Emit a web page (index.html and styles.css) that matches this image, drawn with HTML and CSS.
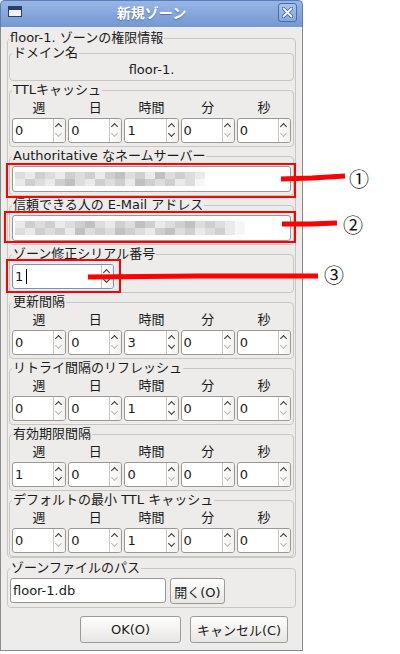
FILE: index.html
```html
<!DOCTYPE html>
<html lang="ja">
<head>
  <meta charset="UTF-8">
  <meta name="viewport" content="width=device-width, initial-scale=1.0">
  <title>新規ゾーン</title>
  <link rel="stylesheet" href="styles.css">
</head>
<body>
  <div class="window">
    <div class="titlebar">
      <span class="win-icon"></span>
      <span class="title">新規ゾーン</span>
      <span class="close-btn">
        <svg width="11" height="11" viewBox="0 0 11 11"><path d="M1.5 1.5 L9.5 9.5 M9.5 1.5 L1.5 9.5" stroke="#3d5f99" stroke-width="3.4" stroke-linecap="round"/><path d="M1.5 1.5 L9.5 9.5 M9.5 1.5 L1.5 9.5" stroke="#fff" stroke-width="1.8" stroke-linecap="round"/></svg>
      </span>
    </div>

    <div class="content">
      <fieldset class="group outer">
        <legend>floor-1. ゾーンの権限情報</legend>

        <fieldset class="group">
          <legend>ドメイン名</legend>
          <div class="domain">floor-1.</div>
        </fieldset>

        <fieldset class="group">
          <legend>TTLキャッシュ</legend>
          <div class="units">
            <span>週</span><span>日</span><span>時間</span><span>分</span><span>秒</span>
            <div class="spin"><span class="val">0</span><span class="arrows"><i class="up"></i><i class="down off"></i></span></div>
            <div class="spin"><span class="val">0</span><span class="arrows"><i class="up"></i><i class="down off"></i></span></div>
            <div class="spin"><span class="val">1</span><span class="arrows"><i class="up"></i><i class="down"></i></span></div>
            <div class="spin"><span class="val">0</span><span class="arrows"><i class="up"></i><i class="down off"></i></span></div>
            <div class="spin"><span class="val">0</span><span class="arrows"><i class="up"></i><i class="down off"></i></span></div>
          </div>
        </fieldset>

        <fieldset class="group">
          <legend>Authoritative なネームサーバー</legend>
          <div class="entry">
            <div class="mosaic m1">
              <span class="s2"></span><span class="s1"></span><span class="s3"></span><span class="s2"></span><span class="s1"></span><span class="s3"></span><span class="s2"></span><span class="s3"></span><span class="s1"></span><span class="s3"></span><span class="s4"></span><span class="s2"></span><span class="s3"></span><span class="s1"></span><span class="s4"></span><span class="s2"></span><span class="s3"></span><span class="s2"></span><span class="s1"></span>
              <span class="s1"></span><span class="s3"></span><span class="s2"></span><span class="s1"></span><span class="s3"></span><span class="s4"></span><span class="s2"></span><span class="s1"></span><span class="s3"></span><span class="s2"></span><span class="s3"></span><span class="s1"></span><span class="s4"></span><span class="s3"></span><span class="s2"></span><span class="s3"></span><span class="s1"></span><span class="s2"></span><span class="s0"></span>
            </div>
          </div>
        </fieldset>

        <fieldset class="group">
          <legend>信頼できる人の E-Mail アドレス</legend>
          <div class="entry">
            <div class="mosaic m2">
              <span class="s1"></span><span class="s3"></span><span class="s2"></span><span class="s3"></span><span class="s1"></span><span class="s2"></span><span class="s3"></span><span class="s4"></span><span class="s2"></span><span class="s1"></span><span class="s3"></span><span class="s2"></span><span class="s4"></span><span class="s3"></span><span class="s1"></span><span class="s2"></span><span class="s3"></span><span class="s4"></span><span class="s2"></span><span class="s3"></span><span class="s2"></span><span class="s1"></span><span class="s0"></span>
              <span class="s2"></span><span class="s1"></span><span class="s3"></span><span class="s2"></span><span class="s3"></span><span class="s1"></span><span class="s4"></span><span class="s2"></span><span class="s3"></span><span class="s2"></span><span class="s4"></span><span class="s3"></span><span class="s2"></span><span class="s1"></span><span class="s3"></span><span class="s4"></span><span class="s2"></span><span class="s3"></span><span class="s1"></span><span class="s2"></span><span class="s3"></span><span class="s1"></span><span class="s0"></span>
            </div>
          </div>
        </fieldset>

        <fieldset class="group">
          <legend>ゾーン修正シリアル番号</legend>
          <div class="spin serial focus"><span class="val">1<span class="caret"></span></span><span class="arrows"><i class="up"></i><i class="down"></i></span></div>
        </fieldset>

        <fieldset class="group">
          <legend>更新間隔</legend>
          <div class="units">
            <span>週</span><span>日</span><span>時間</span><span>分</span><span>秒</span>
            <div class="spin"><span class="val">0</span><span class="arrows"><i class="up"></i><i class="down off"></i></span></div>
            <div class="spin"><span class="val">0</span><span class="arrows"><i class="up"></i><i class="down off"></i></span></div>
            <div class="spin"><span class="val">3</span><span class="arrows"><i class="up"></i><i class="down"></i></span></div>
            <div class="spin"><span class="val">0</span><span class="arrows"><i class="up"></i><i class="down off"></i></span></div>
            <div class="spin"><span class="val">0</span><span class="arrows"><i class="up"></i><i class="down off"></i></span></div>
          </div>
        </fieldset>

        <fieldset class="group">
          <legend>リトライ間隔のリフレッシュ</legend>
          <div class="units">
            <span>週</span><span>日</span><span>時間</span><span>分</span><span>秒</span>
            <div class="spin"><span class="val">0</span><span class="arrows"><i class="up"></i><i class="down off"></i></span></div>
            <div class="spin"><span class="val">0</span><span class="arrows"><i class="up"></i><i class="down off"></i></span></div>
            <div class="spin"><span class="val">1</span><span class="arrows"><i class="up"></i><i class="down"></i></span></div>
            <div class="spin"><span class="val">0</span><span class="arrows"><i class="up"></i><i class="down off"></i></span></div>
            <div class="spin"><span class="val">0</span><span class="arrows"><i class="up"></i><i class="down off"></i></span></div>
          </div>
        </fieldset>

        <fieldset class="group">
          <legend>有効期限間隔</legend>
          <div class="units">
            <span>週</span><span>日</span><span>時間</span><span>分</span><span>秒</span>
            <div class="spin"><span class="val">1</span><span class="arrows"><i class="up"></i><i class="down"></i></span></div>
            <div class="spin"><span class="val">0</span><span class="arrows"><i class="up"></i><i class="down off"></i></span></div>
            <div class="spin"><span class="val">0</span><span class="arrows"><i class="up"></i><i class="down off"></i></span></div>
            <div class="spin"><span class="val">0</span><span class="arrows"><i class="up"></i><i class="down off"></i></span></div>
            <div class="spin"><span class="val">0</span><span class="arrows"><i class="up"></i><i class="down off"></i></span></div>
          </div>
        </fieldset>

        <fieldset class="group">
          <legend>デフォルトの最小 TTL キャッシュ</legend>
          <div class="units">
            <span>週</span><span>日</span><span>時間</span><span>分</span><span>秒</span>
            <div class="spin"><span class="val">0</span><span class="arrows"><i class="up"></i><i class="down off"></i></span></div>
            <div class="spin"><span class="val">0</span><span class="arrows"><i class="up"></i><i class="down off"></i></span></div>
            <div class="spin"><span class="val">1</span><span class="arrows"><i class="up"></i><i class="down"></i></span></div>
            <div class="spin"><span class="val">0</span><span class="arrows"><i class="up"></i><i class="down off"></i></span></div>
            <div class="spin"><span class="val">0</span><span class="arrows"><i class="up"></i><i class="down off"></i></span></div>
          </div>
        </fieldset>
      </fieldset>

      <fieldset class="group path">
        <legend>ゾーンファイルのパス</legend>
        <div class="path-row">
          <div class="entry file">floor-1.db</div>
          <button class="btn open-btn">開く(O)</button>
        </div>
      </fieldset>

      <div class="actions">
        <button class="btn ok-btn">OK(O)</button>
        <button class="btn cancel-btn">キャンセル(C)</button>
      </div>
    </div>
  </div>

  <!-- annotations drawn over the screenshot -->
  <div class="notes">
    <div class="redbox box-1"></div>
    <div class="redbox box-2"></div>
    <div class="redbox box-3"></div>
    <svg class="lines" width="400" height="654" viewBox="0 0 400 654">
      <polyline points="281,179 312,178 345,176" fill="none" stroke="#f00" stroke-width="5"/>
      <polyline points="282,224 310,224 337,223" fill="none" stroke="#f00" stroke-width="5"/>
      <polyline points="88,277 200,276 318,276" fill="none" stroke="#f00" stroke-width="5"/>
    </svg>
    <span class="mark mark-1">①</span>
    <span class="mark mark-2">②</span>
    <span class="mark mark-3">③</span>
  </div>
</body>
</html>
```

FILE: styles.css
```css
body {
  margin: 0;
  background: #fff;
  font-family: "DejaVu Sans", "Noto Sans CJK JP", sans-serif;
  font-size: 13px;
  color: #1a1a1a;
  position: relative;
  width: 400px;
  height: 654px;
  overflow: hidden;
}

.window {
  width: 303px;
  background: #edeceb;
}

/* title bar */
.titlebar {
  height: 27px;
  box-sizing: border-box;
  display: grid;
  grid-template-columns: 20px 1fr 20px;
  align-items: start;
  padding: 0 4px;
  background: linear-gradient(#97b6e6, #7598d2);
  border: 1px solid #5b7db5;
  border-bottom: none;
  border-radius: 5px 5px 0 0;
}

.win-icon {
  width: 14px;
  height: 11px;
  box-sizing: border-box;
  margin: 5px 0 0 3px;
  background: linear-gradient(#1f3f7a 0, #1f3f7a 3px, #f2f2f2 3px);
  border: 1px solid #2e3f5e;
}

.title {
  text-align: center;
  color: #fff;
  font-weight: bold;
  font-size: 14px;
  line-height: 25px;
  text-shadow: 0 1px 1px rgba(30, 50, 90, 0.45);
}

.close-btn {
  width: 19px;
  height: 19px;
  box-sizing: border-box;
  margin: 2px 0 0 0;
  border: 1px solid #4a6ca4;
  border-radius: 3px;
  background: linear-gradient(#a9c3ec, #86a8dc);
  display: flex;
  align-items: center;
  justify-content: center;
}

.content {
  border: 1px solid #8b8b8b;
  border-top: none;
  padding: 4px 6px 7px;
}

/* group frames */
.group {
  margin: 2px 0 0;
  padding: 0 2px 3px;
  border: 1px solid #c9c6c0;
  border-radius: 4px;
  min-width: 0;
}

.group legend {
  padding: 0 1px;
  line-height: 14px;
}

.outer {
  margin-top: 0;
  padding: 0 1px;
}

.outer > .group:first-of-type {
  margin-top: 1px;
}

.domain {
  text-align: center;
  line-height: 14px;
  padding-top: 3px;
}

.units {
  display: grid;
  grid-template-columns: repeat(5, 1fr);
  column-gap: 2px;
  row-gap: 3px;
  padding-top: 4px;
}

.units > span {
  text-align: center;
  line-height: 14px;
}

/* spin buttons */
.spin {
  height: 25px;
  box-sizing: border-box;
  display: flex;
  background: #fff;
  border: 1px solid #9a9893;
  border-radius: 3px;
  margin-top: 0;
}

.group > .spin {
  margin-top: 3px;
}

.spin .val {
  flex: 1;
  padding-left: 2px;
  line-height: 23px;
  display: flex;
  align-items: center;
}

.spin .arrows {
  width: 11px;
  display: flex;
  flex-direction: column;
  border-left: 1px solid #c8c6c1;
  background: linear-gradient(90deg, #fff, #f1f0ee);
  border-radius: 0 2px 2px 0;
}

.arrows i {
  flex: 1;
  position: relative;
}

.arrows i::before {
  content: "";
  position: absolute;
  left: 2px;
  width: 4px;
  height: 4px;
  border-top: 1.5px solid #333;
  border-left: 1.5px solid #333;
}

.arrows .up::before {
  top: 5px;
  transform: rotate(45deg);
}

.arrows .down::before {
  top: 0;
  transform: rotate(225deg);
}

.arrows .off::before {
  border-color: #b9b9b9;
}

.serial {
  width: 102px;
}

.spin.focus {
  border-color: #6f93cc;
}

.caret {
  display: inline-block;
  width: 1px;
  height: 15px;
  background: #000;
  margin-left: 3px;
}

/* text entries */
.entry {
  height: 26px;
  box-sizing: border-box;
  margin-top: 3px;
  padding-left: 2px;
  display: flex;
  align-items: center;
  background: #fff;
  border: 1px solid #9a9893;
  border-radius: 3px;
}

.mosaic {
  display: flex;
  flex-wrap: wrap;
}

.mosaic span {
  width: 10px;
  height: 7px;
}

.m1 { width: 190px; }
.m2 { width: 230px; }

.s0 { background: #f6f6f6; }
.s1 { background: #eaeaea; }
.s2 { background: #dddddd; }
.s3 { background: #cfcfcf; }
.s4 { background: #c1c1c1; }

.path {
  margin-top: 3px;
}

.path-row {
  display: flex;
  gap: 4px;
  padding-top: 3px;
}

.entry.file {
  width: 156px;
  height: 25px;
  margin-top: 0;
  padding-left: 2px;
}

/* buttons */
.btn {
  font: inherit;
  color: #1a1a1a;
  padding: 0;
  border: 1px solid #9d9b97;
  border-radius: 3px;
  background: linear-gradient(#fefefe, #e7e6e3);
}

.open-btn {
  width: 55px;
  height: 26px;
}

.actions {
  display: flex;
  justify-content: flex-end;
  gap: 9px;
  margin-top: 8px;
  padding-right: 8px;
}

.ok-btn {
  width: 101px;
  height: 27px;
}

.cancel-btn {
  width: 98px;
  height: 27px;
}

/* annotation overlay */
.notes {
  position: absolute;
  top: 0;
  left: 0;
  width: 400px;
  height: 654px;
  pointer-events: none;
}

.redbox {
  position: absolute;
  box-sizing: border-box;
  border: 2px solid #f00;
}

.box-1 { left: 6px; top: 163px; width: 290px; height: 35px; }
.box-2 { left: 4px; top: 211px; width: 292px; height: 32px; }
.box-3 { left: 6px; top: 259px; width: 115px; height: 34px; }

.lines {
  position: absolute;
  top: 0;
  left: 0;
}

.mark {
  position: absolute;
  width: 22px;
  text-align: center;
  font-family: "Noto Sans CJK JP", sans-serif;
  font-size: 20px;
  line-height: 20px;
  color: #111;
}

.mark-1 { left: 348px; top: 169px; }
.mark-2 { left: 342px; top: 215px; }
.mark-3 { left: 323px; top: 265px; }
```
